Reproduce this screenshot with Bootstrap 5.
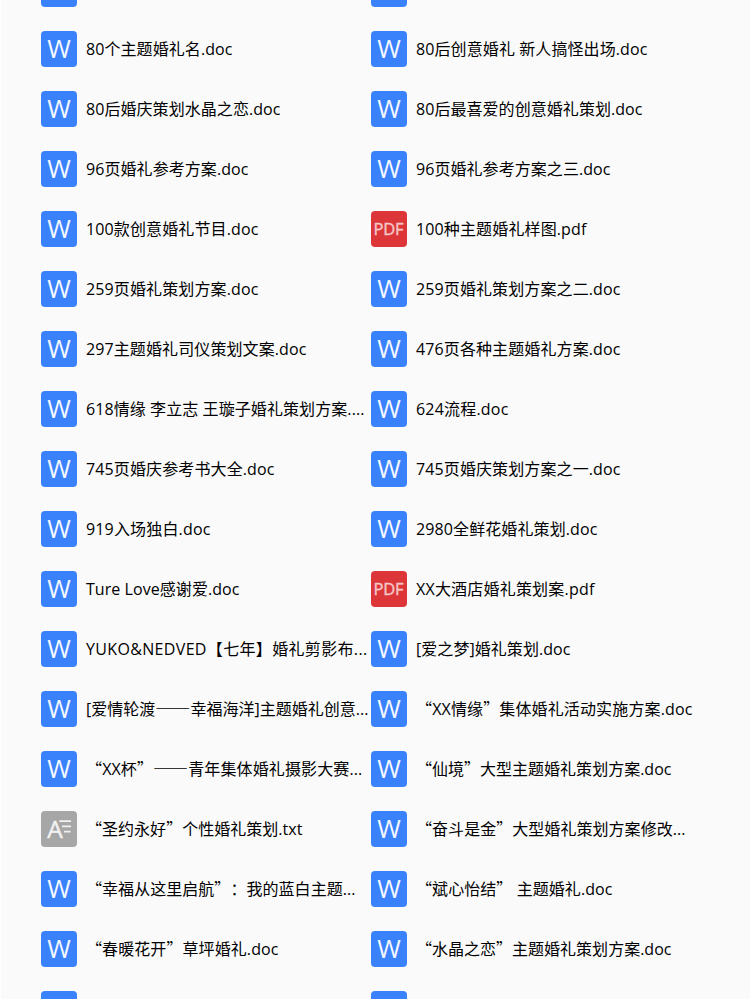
<!DOCTYPE html>
<html lang="zh-CN">
<head>
<meta charset="utf-8">
<meta name="viewport" content="width=device-width, initial-scale=1">
<title>婚礼策划文档</title>
<link href="https://cdn.jsdelivr.net/npm/bootstrap@5.3.0/dist/css/bootstrap.min.css" rel="stylesheet">
<style>
body{background:#fafafa;color:#000;font:16px/24px "Open Sans","Noto Sans CJK SC",sans-serif;}
.file-pane{height:999px;border-left:1px solid #fff;padding-left:40px}
.file-grid{display:grid;grid-template-columns:330px 330px;grid-auto-rows:60px;margin-top:-41px}
.file-icon{width:36px;height:36px;border-radius:4px;background:#3a82fc;color:#f4f8ff;margin-right:9px}
.file-icon text{font-family:"Open Sans",sans-serif;fill:currentColor}
.file-icon.pdf{background:#dc3639;color:#f6c6c7}
.file-icon.txt{background:#a6a6a6;color:#f2f2f2}
.zh{font-family:"Noto Sans CJK SC",sans-serif;line-height:1}
.zh-mark{display:inline-block}
.zh-dash{font-size:17.5px}
</style>
<script src="https://cdn.jsdelivr.net/npm/bootstrap@5.3.0/dist/js/bootstrap.bundle.min.js"></script>
</head>
<body>
<main class="file-pane overflow-hidden"><div class="file-grid" id="files"></div></main>
<script>
// [name, rendered width of the name in px]
const files = [
 ["",0],["",0],
 ["80个主题婚礼名.doc",147],["80后创意婚礼 新人搞怪出场.doc",232],
 ["80后婚庆策划水晶之恋.doc",195],["80后最喜爱的创意婚礼策划.doc",227],
 ["96页婚礼参考方案.doc",163],["96页婚礼参考方案之三.doc",195],
 ["100款创意婚礼节目.doc",173],["100种主题婚礼样图.pdf",171],
 ["259页婚礼策划方案.doc",173],["259页婚礼策划方案之二.doc",205],
 ["297主题婚礼司仪策划文案.doc",221],["476页各种主题婚礼方案.doc",205],
 ["618情缘 李立志 王璇子婚礼策划方案....",279],["624流程.doc",93],
 ["745页婚庆参考书大全.doc",189],["745页婚庆策划方案之一.doc",205],
 ["919入场独白.doc",125],["2980全鲜花婚礼策划.doc",182],
 ["Ture Love感谢爱.doc",154],["XX大酒店婚礼策划案.pdf",179],
 ["YUKO&NEDVED【七年】婚礼剪影布...",282],["[爱之梦]婚礼策划.doc",155],
 ["[爱情轮渡——幸福海洋]主题婚礼创意...",283],["“XX情缘”集体婚礼活动实施方案.doc",277],
 ["“XX杯”——青年集体婚礼摄影大赛...",277],["“仙境”大型主题婚礼策划方案.doc",256],
 ["“圣约永好”个性婚礼策划.txt",217],["“奋斗是金”大型婚礼策划方案修改...",270],
 ["“幸福从这里启航”：我的蓝白主题...",270],["“斌心怡结” 主题婚礼.doc",197],
 ["“春暖花开”草坪婚礼.doc",193],["“水晶之恋”主题婚礼策划方案.doc",256],
 ["",0],["",0]
];
const glyphs = {
 doc:'<text x="18" y="27" font-size="25.5" text-anchor="middle">W</text>',
 pdf:'<text x="17.5" y="24" font-size="16.5" text-anchor="middle" textLength="30" stroke="currentColor" stroke-width=".4">PDF</text>',
 txt:'<text x="6.3" y="27" font-size="24.5" stroke="currentColor" stroke-width=".4">A</text><path d="M18.3 10.2H30M21 15.4H30M23 20.6H29.5" stroke="currentColor" stroke-width="1.7"/>'
};
const grid = document.getElementById('files');
for (const [name, width] of files) {
  const type = name.endsWith('.pdf') ? 'pdf' : name.endsWith('.txt') ? 'txt' : 'doc';
  const label = name.replace(/&/g,'&amp;')
    .replace(/[“”：]/g, m => `<span class="zh zh-mark">${m}</span>`)
    .replace(/—+/g, m => `<span class="zh zh-dash">${m}</span>`);
  grid.insertAdjacentHTML('beforeend',
   `<div class="d-flex align-items-center"><svg class="file-icon flex-shrink-0 ${type}" viewBox="0 0 36 36" aria-hidden="true">${name ? glyphs[type] : ''}</svg><span class="text-nowrap">${label}</span></div>`);
  const el = grid.lastElementChild.lastElementChild;
  if (width) {
    const natural = el.getBoundingClientRect().width;
    el.style.letterSpacing = ((width - .5 - natural) / name.length).toFixed(3) + 'px';
  }
}
</script>
</body>
</html>
